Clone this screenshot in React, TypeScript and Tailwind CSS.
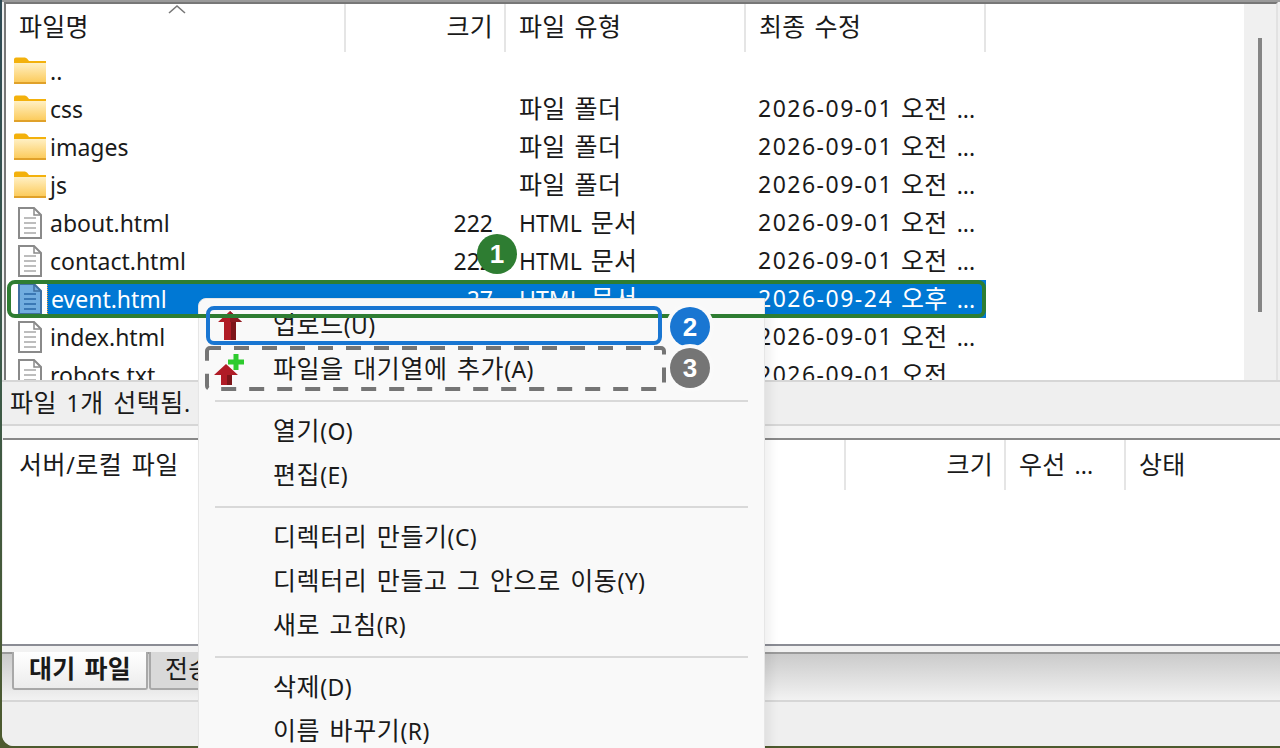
import React from 'react'

const FONT = 'font-["Noto_Sans","Noto_Sans_CJK_KR",sans-serif]'

type Row = { name: string; size?: string; type?: string; date?: string; time?: string; folder?: boolean; selected?: boolean }

const ROWS: Row[] = [
  { name: '..', folder: true },
  { name: 'css', type: '파일 폴더', date: '2026-09-01', time: '오전 ...', folder: true },
  { name: 'images', type: '파일 폴더', date: '2026-09-01', time: '오전 ...', folder: true },
  { name: 'js', type: '파일 폴더', date: '2026-09-01', time: '오전 ...', folder: true },
  { name: 'about.html', size: '222', type: 'HTML 문서', date: '2026-09-01', time: '오전 ...' },
  { name: 'contact.html', size: '222', type: 'HTML 문서', date: '2026-09-01', time: '오전 ...' },
  { name: 'event.html', size: '27', type: 'HTML 문서', date: '2026-09-24', time: '오후 ...', selected: true },
  { name: 'index.html', size: '222', type: 'HTML 문서', date: '2026-09-01', time: '오전 ...' },
  { name: 'robots.txt', size: '26', type: '텍스트 문서', date: '2026-09-01', time: '오전 ...' },
]

// hangul is set a bit larger than the latin text, like the original UI font
function T({ text, wide }: { text: string; wide?: boolean }) {
  const parts = text.split(/([가-힣]+)/)
  return (
    <span className="whitespace-nowrap [word-spacing:3px]">
      {parts.map((part, i) =>
        /[가-힣]/.test(part) ? (
          <span key={i} className={`text-[25px] ${wide ? 'tracking-[0.6px]' : 'tracking-[0.3px]'}`}>{part}</span>
        ) : (
          <span key={i} className={wide ? 'tracking-[0.4px]' : ''}>{part}</span>
        ),
      )}
    </span>
  )
}

function FolderIcon() {
  return (
    <svg width="32" height="28" viewBox="0 0 32 28" className="shrink-0">
      <defs>
        <linearGradient id="folderFill" x1="0" y1="0" x2="0" y2="1">
          <stop offset="0" stopColor="#fff0c4" />
          <stop offset="1" stopColor="#fcca58" />
        </linearGradient>
      </defs>
      <path d="M0 2.5Q0 0.5 2 0.5H11Q13 0.5 15 4H32V10H0Z" fill="#f3b10c" />
      <path d="M0 6H32V26H0Z" fill="url(#folderFill)" />
      <rect x="0" y="25" width="32" height="2" fill="#e0a12a" />
    </svg>
  )
}

function FileIcon({ selected }: { selected?: boolean }) {
  const stroke = selected ? '#3f6f9f' : '#8a8a8a'
  const line = selected ? '#3b78b5' : '#bdbdbd'
  return (
    <svg width="24" height="32" viewBox="0 0 24 32" className="shrink-0">
      <path d="M1 1H16L23 8V31H1Z" fill={selected ? '#72ade0' : '#fff'} stroke={stroke} strokeWidth="2" />
      <path d="M16 1V8H23" fill="none" stroke={stroke} strokeWidth="1.5" />
      <path d="M6 11H18M6 16H18M6 21H18M6 26H18" stroke={line} strokeWidth="2" />
    </svg>
  )
}

function UploadIcon() {
  return (
    <svg width="26" height="30" viewBox="0 0 26 30" className="absolute left-[217px] top-[311px]">
      <path d="M13 0L25 11H19V29H7V11H1Z" fill="#b01c26" />
      <path d="M14 11H19V29H14Z" fill="#7d1519" />
      <path d="M13 0L25 11H13Z" fill="#8c1a20" />
    </svg>
  )
}

function QueueIcon() {
  return (
    <svg width="32" height="32" viewBox="0 0 32 32" className="absolute left-[214px] top-[354px]">
      <path d="M12 10L24 21H18V31H7V21H0Z" fill="#b01c26" />
      <path d="M13 21H18V31H13Z" fill="#7d1519" />
      <path d="M19.5 5.5V0H24.5V5.5H30V10.5H24.5V16H19.5V10.5H14V5.5Z" fill="#2ecb2e" />
    </svg>
  )
}

function HeaderCell({ label, width, right, lower }: { label: string; width: string; right?: boolean; lower?: boolean }) {
  return (
    <div className={`${width} h-full flex items-center border-r-2 border-[#e5e5e5] shrink-0 ${lower ? 'pb-[1px]' : 'pb-[3px]'} ${right ? 'justify-end pr-[11px]' : 'pl-[13px]'}`}>
      <T text={label} />
    </div>
  )
}

function FileRow({ row }: { row: Row }) {
  const sel = row.selected ? 'bg-[#0078d4]' : ''
  return (
    <div className={`h-[38px] shrink-0 flex items-center ${row.selected ? 'text-white' : 'text-[#1a1a1a]'}`}>
      <div className="w-[340px] h-full flex items-center pl-[7px] shrink-0">
        <div className="w-[34px] flex justify-center">
          {row.folder ? <FolderIcon /> : <FileIcon selected={row.selected} />}
        </div>
        <div className={`h-full flex-1 flex items-center pl-[3px] ${row.selected ? 'bg-[#0078d4] border-l border-dotted border-[#f0a040] pl-[2px]' : ''}`}>{row.name}</div>
      </div>
      <div className={`w-[160px] h-full flex items-center justify-end pr-[13px] shrink-0 ${sel}`}>{row.size}</div>
      <div className={`w-[240px] h-full flex items-center pl-[13px] pb-[2px] shrink-0 ${sel}`}>{row.type && <T text={row.type} />}</div>
      <div className={`w-[240px] h-full flex items-center pl-[12px] pb-[2px] shrink-0 whitespace-nowrap ${sel}`}>
        {row.date && <span className="tracking-[1.5px] mr-[8px]">{row.date}</span>}
        {row.time && <T text={row.time} />}
      </div>
    </div>
  )
}

function MenuItem({ label }: { label: string }) {
  return (
    <div className="h-[44px] flex items-center pl-[74px] pb-[4px] whitespace-nowrap">
      <T text={label} wide />
    </div>
  )
}

function MenuSep() {
  return (
    <div className="h-[18px] flex items-center px-[16px]">
      <div className="h-[2px] w-full bg-[#d9d9d9]" />
    </div>
  )
}

function Badge({ n, className }: { n: string; className: string }) {
  return (
    <div className={`absolute w-[40px] h-[40px] rounded-full flex items-center justify-center text-white text-[26px] font-bold font-["Liberation_Sans",sans-serif] ${className}`}>
      {n}
    </div>
  )
}

export default function App() {
  return (
    <div className={`relative w-[1280px] h-[748px] overflow-hidden bg-gradient-to-b from-[#2f4a55] via-[#3c5a48] to-[#4d5a2e] text-[23px] leading-none text-[#1a1a1a] ${FONT}`}>
      <div className="ml-[2px] h-[746px] bg-[#efefef] rounded-bl-[12px] overflow-hidden flex flex-col">
        {/* remote file list */}
        <div className="h-[380px] shrink-0 flex pl-[2px] border-t-[2px] border-[#9a9a9a]">
          <div className="flex-1 min-w-0 flex flex-col bg-white border-t-[2px] border-l-[2px] border-[#777] overflow-hidden">
            <div className="h-[48px] shrink-0 flex">
              <HeaderCell label="파일명" width="w-[340px]" />
              <HeaderCell label="크기" width="w-[160px]" right />
              <HeaderCell label="파일 유형" width="w-[240px]" />
              <HeaderCell label="최종 수정" width="w-[240px]" />
            </div>
            {ROWS.map((row) => (
              <FileRow key={row.name} row={row} />
            ))}
          </div>
          <div className="w-[34px] shrink-0 bg-[#f0f0f0] border-t-[2px] border-[#777] border-r-[2px] border-r-[#e2e2e2] pt-[34px] flex justify-center">
            <div className="w-[4px] h-[274px] bg-[#858585]" />
          </div>
          <div className="w-[2px] shrink-0 bg-[#efefef]" />
        </div>

        {/* status bar */}
        <div className="h-[46px] shrink-0 flex items-center border-t-[2px] border-b-[2px] border-[#d6d6d6] pl-[8px] pb-[2px]">
          <T text="파일 1개 선택됨." wide />
        </div>
        <div className="h-[12px] shrink-0 bg-[#f5f5f5]" />

        {/* queue */}
        <div className="h-[206px] shrink-0 ml-[1px] bg-white border-t-[2px] border-[#888] flex flex-col">
          <div className="h-[50px] shrink-0 flex">
            <div className="w-[843px] h-full flex items-center border-r-2 border-[#e5e5e5] shrink-0 pb-[1px] pl-[16px]">
              <T text="서버/로컬 파일" wide />
            </div>
            <HeaderCell label="크기" width="w-[160px]" right lower />
            <HeaderCell label="우선 ..." width="w-[120px]" lower />
            <div className="flex-1 flex items-center pl-[13px] pb-[1px]">
              <T text="상태" />
            </div>
          </div>
        </div>
        <div className="h-[2px] shrink-0 bg-[#8a8c94]" />
        <div className="h-[6px] shrink-0 bg-[#f2f2f2]" />

        {/* tabs */}
        <div className="h-[50px] shrink-0 flex items-start pl-[10px] border-t-[2px] border-[#9a9a9a] bg-gradient-to-b from-[#cbcbcb] to-[#f2f2f2] border-b-[2px] border-b-[#d6d6d6]">
          <div className="w-[136px] h-[38px] flex items-center justify-center pb-[3px] font-semibold bg-gradient-to-b from-white to-[#ececec] border-x-[2px] border-b-[2px] border-[#a8a8a8] rounded-b-[3px] -mt-[2px]">
            <T text="대기 파일" />
          </div>
          <div className="w-[60px] h-[38px] ml-[1px] pl-[14px] pb-[3px] flex items-center overflow-hidden bg-[#d9d9d9] border-x-[2px] border-b-[2px] border-[#a8a8a8] rounded-b-[3px] -mt-[2px]">
            <T text="전송" />
          </div>
        </div>
        <div className="flex-1 bg-[#efefef]" />
      </div>

      {/* context menu */}
      <div className="absolute left-[198px] top-[298px] w-[567px] h-[460px] bg-[#f9f9f9] border border-[#e6e6e6] rounded-tl-[8px] pt-[5px] shadow-[6px_0_10px_rgba(0,0,0,0.06)]">
        <MenuItem label="업로드(U)" />
        <MenuItem label="파일을 대기열에 추가(A)" />
        <MenuSep />
        <MenuItem label="열기(O)" />
        <MenuItem label="편집(E)" />
        <MenuSep />
        <MenuItem label="디렉터리 만들기(C)" />
        <MenuItem label="디렉터리 만들고 그 안으로 이동(Y)" />
        <MenuItem label="새로 고침(R)" />
        <MenuSep />
        <MenuItem label="삭제(D)" />
        <MenuItem label="이름 바꾸기(R)" />
      </div>
      <UploadIcon />
      <QueueIcon />

      {/* annotations */}
      <div className="absolute left-[7px] top-[280px] w-[979px] h-[38px] border-[4px] border-[#2e7d32] rounded-[8px]" />
      <div className="absolute left-[206px] top-[306px] w-[456px] h-[39px] border-[4px] border-[#1976d2] rounded-[8px]" />
      <svg width="462" height="47" className="absolute left-[204px] top-[346px]">
        <rect x="3" y="2" width="457" height="41" rx="3" fill="none" stroke="#757575" strokeWidth="4" strokeDasharray="15 13" strokeDashoffset="4" />
      </svg>
      <Badge n="1" className="left-[477px] top-[234px] bg-[#2e7d32]" />
      <Badge n="2" className="left-[670px] top-[307px] bg-[#1976d2] ring-[4px] ring-[#fafafa]" />
      <Badge n="3" className="left-[670px] top-[348px] bg-[#757575] ring-[4px] ring-[#fafafa]" />

      {/* sort caret */}
      <svg width="18" height="10" viewBox="0 0 18 10" className="absolute left-[168px] top-[4px]">
        <path d="M1 9L9 2L17 9" fill="none" stroke="#777" strokeWidth="1.6" />
      </svg>
    </div>
  )
}
